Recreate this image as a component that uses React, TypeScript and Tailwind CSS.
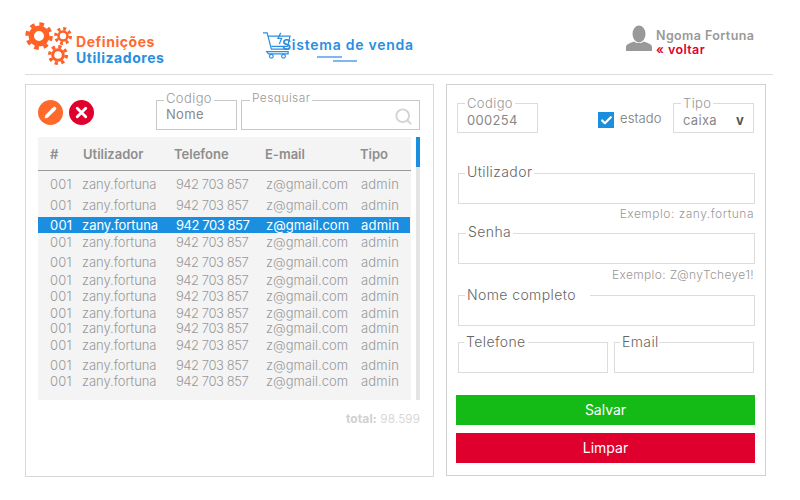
import { Check, Pencil, Search, X } from 'lucide-react';

const rowGaps = [
  'mt-[5px]',
  'mt-[5px]',
  'mt-[4px]',
  'mt-[1px]',
  'mt-[4px]',
  'mt-[2px]',
  'mt-[0px]',
  'mt-[1px]',
  '-mt-[1px]',
  'mt-[1px]',
  'mt-[4px]',
  'mt-[0px]',
];

function Gear({ size, hole, band }: { size: number; hole: number; band: number }) {
  const r = hole + band / 2;
  const teethR = hole + band + 1.5;
  const circ = 2 * Math.PI * teethR;
  return (
    <svg width={size * 2 + 2} height={size * 2 + 2} viewBox={`${-size - 1} ${-size - 1} ${size * 2 + 2} ${size * 2 + 2}`}>
      <circle r={r} fill="none" stroke="#ff6126" strokeWidth={band} />
      <circle r={teethR} fill="none" stroke="#ff6126" strokeWidth={3.5} strokeDasharray={`${circ / 16} ${circ / 16}`} />
    </svg>
  );
}

function Header() {
  return (
    <header className="mx-[25px] w-[748px] h-[75px] border-b border-[#dcdcdc] flex">
      <div className="w-[237px] flex">
        <div className="relative w-[51px] h-[50px] mt-[19px]">
          <div className="absolute left-[-2px] top-[1px]"><Gear size={15} hole={5} band={5.5} /></div>
          <div className="absolute left-[28px] top-[7px]"><Gear size={9} hole={3.2} band={2.5} /></div>
          <div className="absolute left-[22px] top-[25px]"><Gear size={10} hole={3.8} band={3} /></div>
        </div>
        <div className="mt-[34px] text-[14px] leading-[16px] font-bold tracking-[0.55px]">
          <div className="text-[#ff6a30]">Definições</div>
          <div className="text-[#2a8fe0]">Utilizadores</div>
        </div>
      </div>
      <div className="w-[364px] flex">
        <svg className="mt-[31px] -ml-[1px]" width="31" height="28" viewBox="0 0 31 30" fill="none" stroke="#2b8fe3" strokeWidth="1.3">
          <path d="M1 2h4.5l4.5 17.5h19" />
          <path d="M6.5 5.5H30l-2.5 11H10" />
          <path d="M5 22h23v2.5H7z" />
          <circle cx="10" cy="27" r="2" />
          <circle cx="23" cy="27" r="2" />
          <path d="M20 2l-3 6h4l-2.5 6" />
        </svg>
        <div className="-ml-[10px]">
          <div className="mt-[37px] text-[14px] leading-[16px] font-semibold text-[#2a8fe0] tracking-[0.75px]">Sistema de venda</div>
          <div className="ml-[35px] mt-[3px] w-[25px] h-[2px] bg-[#7db8f5]" />
          <div className="ml-[51px] mt-[2px] w-[24px] h-[2px] bg-[#7db8f5]" />
        </div>
      </div>
      <div className="flex">
        <svg className="mt-[25px]" width="26" height="27" viewBox="0 0 26 27" fill="#999999">
          <ellipse cx="13" cy="9" rx="6.5" ry="8.5" />
          <path d="M0 26v-4c0-3 5-4 8-5.500 3 2 7 2 10 0 3 1.500 8 2.500 8 5.500v4z" />
        </svg>
        <div className="ml-[4px] mt-[29px] text-[12.500px] leading-[14px] font-semibold tracking-[0.4px]">
          <div className="text-[#999999]">Ngoma Fortuna</div>
          <div className="text-[#e0002d]">« voltar</div>
        </div>
      </div>
    </header>
  );
}

function UsersPanel() {
  return (
    <section className="w-[409px] h-[393px] border border-[#d8d8d8] pl-[12px] pr-[13px]">
      <div className="flex h-[52px]">
        <button className="mt-[15px] w-[25px] h-[25px] rounded-full bg-[#ff6a2a] flex items-center justify-center">
          <Pencil size={13} color="white" fill="white" strokeWidth={1.500} />
        </button>
        <button className="mt-[15px] ml-[6px] w-[25px] h-[25px] rounded-full bg-[#e0002d] flex items-center justify-center">
          <X size={17} color="white" strokeWidth={4} />
        </button>
        <fieldset className="ml-[62px] w-[81px] h-[38px] mt-[7px] border border-[#c8c8c8] pl-[9px]">
          <legend className="relative -top-[2px] px-[2px] -ml-[2px] text-[13px] leading-[16px] font-light text-[#999999] tracking-[0.4px]">Codigo</legend>
          <div className="text-[13px] leading-[16px] text-[#888888] tracking-[0.3px] -mt-[2px]">Nome</div>
        </fieldset>
        <fieldset className="ml-[4px] w-[179px] h-[38px] mt-[7px] border border-[#c8c8c8] pl-[10px]">
          <legend className="relative -top-[2px] px-[2px] -ml-[2px] text-[12px] leading-[16px] font-light text-[#999999] tracking-[0.4px]">Pesquisar</legend>
          <div className="flex justify-end pr-[6px] -mt-[1px]">
            <Search size={19} color="#d5d5d5" strokeWidth={2.500} />
          </div>
        </fieldset>
      </div>
      <div className="flex">
        <div className="w-[374px] h-[263px] bg-[#f4f4f4]">
          <div className="grid grid-cols-[33px_91px_91px_95px_1fr] h-[34px] pl-[12px] pt-[3px] items-center border-b border-[#999999] text-[13px] font-semibold text-[#8e8e8e]">
            <div>#</div>
            <div>Utilizador</div>
            <div>Telefone</div>
            <div>E-mail</div>
            <div>Tipo</div>
          </div>
          {rowGaps.map((gap, i) => (
            <div
              key={i}
              className={`grid grid-cols-[32px_94px_90px_95px_1fr] w-[372px] pl-[12px] h-[16px] items-center text-[13px] leading-[16px] font-light ${gap} ${
                i === 2 ? 'bg-[#1a8fe0] text-white font-normal' : 'text-[#999999]'
              }`}
            >
              <div className="tracking-[0.2px]">001</div>
              <div className="whitespace-nowrap -tracking-[0.05px]">zany.fortuna</div>
              <div className="whitespace-nowrap -tracking-[0.45px]">942 703 857</div>
              <div className="whitespace-nowrap">z@gmail.com</div>
              <div className="tracking-[0.2px]">admin</div>
            </div>
          ))}
        </div>
        <div className="ml-[5px] w-[4px] h-[263px] bg-[#e4e4e4]">
          <div className="h-[30px] bg-[#1a8fe0]" />
        </div>
      </div>
      <div className="mt-[11px] text-right text-[12px] leading-[16px] text-[#d0d0d0] font-light tracking-[0.1px]">
        <span className="font-bold">total:</span> 98.599
      </div>
    </section>
  );
}

function UserForm() {
  return (
    <section className="ml-[12px] w-[320px] h-[392px] border border-[#d0d0d0] pl-[10px] pr-[10px]">
      <div className="flex h-[61px]">
        <fieldset className="w-[81px] h-[38px] mt-[10px] border border-[#dcdcdc] pl-[9px]">
          <legend className="px-[2px] -ml-[2px] text-[13px] leading-[16px] font-light text-[#999999] tracking-[0.4px]">Codigo</legend>
          <div className="text-[13px] leading-[16px] text-[#888888] tracking-[0.3px] mt-[1px]">000254</div>
        </fieldset>
        <div className="ml-[60px] mt-[27px] w-[16px] h-[16px] bg-[#1a8fe0] flex items-center justify-center">
          <Check size={13} color="white" strokeWidth={4} />
        </div>
        <div className="ml-[6px] mt-[24px] w-[53px] text-[13px] leading-[18px] font-light text-[#777777] tracking-[0.1px]">estado</div>
        <fieldset className="w-[81px] h-[38px] mt-[10px] border border-[#dcdcdc] pl-[9px]">
          <legend className="px-[2px] -ml-[2px] text-[13px] leading-[16px] font-light text-[#999999] tracking-[0.4px]">Tipo</legend>
          <div className="flex justify-between pr-[9px] text-[13px] leading-[16px] text-[#888888] tracking-[0.3px] mt-[1px]">
            <span>caixa</span>
            <span className="font-bold text-[#555555]">v</span>
          </div>
        </fieldset>
      </div>
      <fieldset className="ml-[1px] w-[297px] h-[39px] mt-[19px] border border-[#dcdcdc] pl-[6px]">
        <legend className="relative -top-[1px] px-[2px] text-[14px] leading-[16px] font-light text-[#666666] tracking-[0.4px]">Utilizador</legend>
      </fieldset>
      <div className="w-[296px] ml-[1px] mt-[2px] text-right text-[12px] leading-[16px] font-light text-[#999999] tracking-[0.5px]">Exemplo: zany.fortuna</div>
      <fieldset className="ml-[1px] w-[297px] h-[39px] mt-[3px] border border-[#dcdcdc] pl-[7px]">
        <legend className="relative -top-[1px] px-[2px] text-[14px] leading-[16px] font-light text-[#666666] tracking-[0.4px]">Senha</legend>
      </fieldset>
      <div className="w-[296px] ml-[1px] mt-[3px] text-right text-[12px] leading-[16px] font-light text-[#999999] tracking-[0.35px]">Exemplo: Z@nyTcheye1!</div>
      <fieldset className="ml-[1px] w-[297px] h-[39px] mt-[4px] border border-[#dcdcdc] pl-[6px]">
        <legend className="pl-[2px] pr-[14px] text-[14px] leading-[16px] font-light text-[#666666] tracking-[0.4px]">Nome completo</legend>
      </fieldset>
      <div className="ml-[1px] mt-[8px] flex">
        <fieldset className="w-[150px] h-[39px] border border-[#dcdcdc] pl-[5px]">
          <legend className="px-[2px] text-[14px] leading-[16px] font-light text-[#666666] tracking-[0.4px]">Telefone</legend>
        </fieldset>
        <fieldset className="ml-[6px] w-[140px] h-[39px] border border-[#dcdcdc] pl-[5px]">
          <legend className="pl-[2px] text-[14px] leading-[16px] font-light text-[#666666] tracking-[0.4px]">Email</legend>
        </fieldset>
      </div>
      <button className="-ml-[1px] mt-[22px] pb-[2px] block w-[299px] h-[30px] bg-[#14bb17] text-white text-[14px]">Salvar</button>
      <button className="-ml-[1px] mt-[8px] pb-[2px] block w-[299px] h-[30px] bg-[#e0002d] text-white text-[14px]">Limpar</button>
    </section>
  );
}

export default function App() {
  return (
    <div className="w-[800px] h-[500px] bg-white overflow-hidden font-['Inter',sans-serif]">
      <Header />
      <main className="mt-[9px] ml-[25px] flex">
        <UsersPanel />
        <UserForm />
      </main>
    </div>
  );
}
